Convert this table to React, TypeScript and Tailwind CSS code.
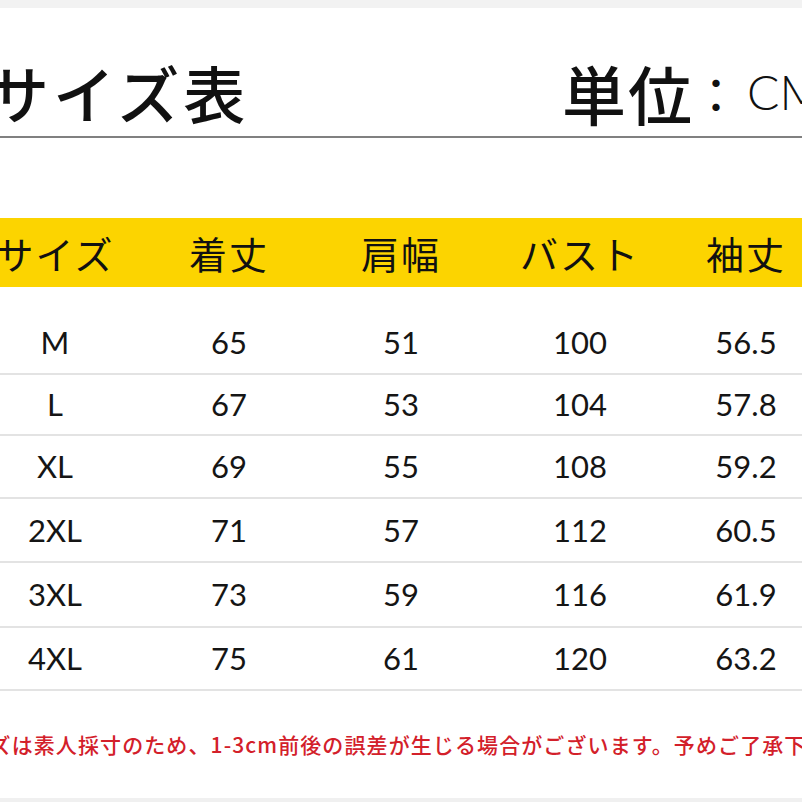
import React from "react";

const rows = [
  { s: "M", a: "65", b: "51", c: "100", d: "56.5", h: "h-[63px]" },
  { s: "L", a: "67", b: "53", c: "104", d: "57.8", h: "h-[61px]" },
  { s: "XL", a: "69", b: "55", c: "108", d: "59.2", h: "h-[63px]" },
  { s: "2XL", a: "71", b: "57", c: "112", d: "60.5", h: "h-[64px]" },
  { s: "3XL", a: "73", b: "59", c: "116", d: "61.9", h: "h-[65px]" },
  { s: "4XL", a: "75", b: "61", c: "120", d: "63.2", h: "h-[63px]" },
];

const cjk = { fontFamily: '"Noto Sans CJK JP", "Noto Sans", sans-serif' };
const num = { fontFamily: 'Lato, "Open Sans", sans-serif' };

const cols = "grid grid-cols-[174px_174px_170px_188px_144px] ml-[-32px] w-[850px]";

export default function App() {
  return (
    <div className="w-[802px] h-[802px] bg-white overflow-hidden flex flex-col">
      <div className="h-[8px] bg-[#f2f2f2] shrink-0" />
      <div className="h-[128px] shrink-0 flex items-end pb-[12px] whitespace-nowrap" style={cjk}>
        <div className="w-[565px] shrink-0 ml-[-13px]">
          <span className="text-[62px] leading-none tracking-[4px] text-[#111] font-medium">サイズ表</span>
        </div>
        <div className="shrink-0 flex items-center ml-[10px]">
          <span className="text-[64px] leading-none tracking-[2px] text-[#111] font-medium">単位</span>
          <span className="text-[48px] leading-none text-[#111] ml-[-2px]">：</span>
          <span className="text-[48px] leading-none text-[#111] font-light ml-[7px]" style={num}>CM</span>
        </div>
      </div>
      <div className="h-[2px] bg-[#808080] shrink-0" />
      <div className="h-[80px] shrink-0" />
      <div className="h-[69px] shrink-0 bg-[#fcd400] overflow-hidden">
        <div className={cols + " h-full items-center text-[38px] leading-none text-[#111] tracking-[2px]"} style={cjk}>
          <div className="text-center">サイズ</div>
          <div className="text-center">着丈</div>
          <div className="text-center">肩幅</div>
          <div className="text-center">バスト</div>
          <div className="text-center">袖丈</div>
        </div>
      </div>
      <div className="h-[25px] shrink-0" />
      <div className="shrink-0 overflow-hidden">
        {rows.map((r, i) => (
          <div key={i} className={r.h + " border-b-2 border-[#e3e3e3] overflow-hidden"}>
            <div className={cols + " h-full items-center text-[31px] leading-none text-[#151515]"} style={num}>
              <div className="text-center">{r.s}</div>
              <div className="text-center">{r.a}</div>
              <div className="text-center">{r.b}</div>
              <div className="text-center">{r.c}</div>
              <div className="text-center">{r.d}</div>
            </div>
          </div>
        ))}
      </div>
      <div className="flex-1 flex items-center overflow-hidden whitespace-nowrap">
        <span className="ml-[-54px] text-[21px] leading-none tracking-[1.1px] text-[#d3202a] font-medium" style={cjk}>
          サイズは素人採寸のため、1-3cm前後の誤差が生じる場合がございます。予めご了承下さい。
        </span>
      </div>
      <div className="h-[4px] bg-[#f0f0f0] shrink-0" />
    </div>
  );
}
